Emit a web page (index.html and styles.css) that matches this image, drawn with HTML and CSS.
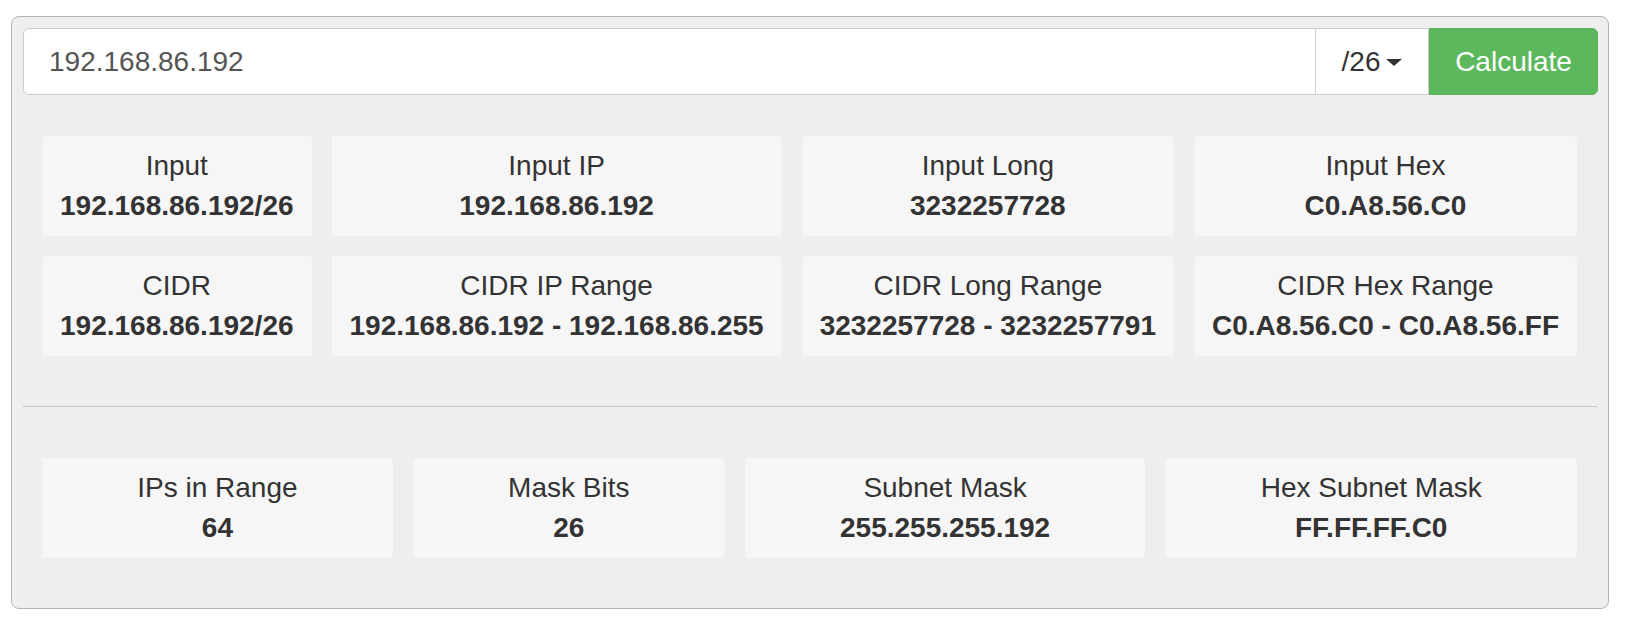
FILE: index.html
```html
<!DOCTYPE html>
<html lang="en">
<head>
<meta charset="utf-8">
<title>IP Subnet Calculator</title>
<link rel="stylesheet" href="styles.css">
</head>
<body>
<div class="panel">
  <form class="input-group">
    <input class="ip-input" type="text" value="192.168.86.192">
    <div class="mask-select">/26 <span class="caret"></span></div>
    <button class="calc-btn" type="button">Calculate</button>
  </form>

  <div class="grid grid-top">
    <div class="card"><div class="label">Input</div><div class="value">192.168.86.192/26</div></div>
    <div class="card"><div class="label">Input IP</div><div class="value">192.168.86.192</div></div>
    <div class="card"><div class="label">Input Long</div><div class="value">3232257728</div></div>
    <div class="card"><div class="label">Input Hex</div><div class="value">C0.A8.56.C0</div></div>
    <div class="card"><div class="label">CIDR</div><div class="value">192.168.86.192/26</div></div>
    <div class="card"><div class="label">CIDR IP Range</div><div class="value">192.168.86.192 - 192.168.86.255</div></div>
    <div class="card"><div class="label">CIDR Long Range</div><div class="value">3232257728 - 3232257791</div></div>
    <div class="card"><div class="label">CIDR Hex Range</div><div class="value">C0.A8.56.C0 - C0.A8.56.FF</div></div>
  </div>

  <hr class="divider">

  <div class="grid grid-bottom">
    <div class="card"><div class="label">IPs in Range</div><div class="value">64</div></div>
    <div class="card"><div class="label">Mask Bits</div><div class="value">26</div></div>
    <div class="card"><div class="label">Subnet Mask</div><div class="value">255.255.255.192</div></div>
    <div class="card"><div class="label">Hex Subnet Mask</div><div class="value">FF.FF.FF.C0</div></div>
  </div>
</div>
</body>
</html>
```

FILE: styles.css
```css
html, body {
  margin: 0;
  padding: 0;
  background: #ffffff;
}

body {
  font-family: "Liberation Sans", Arial, Helvetica, sans-serif;
  color: #333333;
}

.panel {
  box-sizing: border-box;
  width: 1598px;
  height: 593px;
  margin: 16px 0 0 11px;
  padding: 11px;
  background: #eeeeee;
  border: 1px solid #b4b4b4;
  border-radius: 8px;
}

.input-group {
  display: flex;
  height: 67px;
  margin: 0;
}

.ip-input {
  flex: 1 1 auto;
  box-sizing: border-box;
  height: 67px;
  margin: 0;
  padding: 0 25px;
  font-family: "Liberation Sans", Arial, Helvetica, sans-serif;
  font-size: 28px;
  color: #555555;
  background: #ffffff;
  border: 1px solid #cccccc;
  border-radius: 6px 0 0 6px;
  outline: none;
}

.mask-select {
  box-sizing: border-box;
  width: 113px;
  height: 67px;
  display: flex;
  align-items: center;
  justify-content: center;
  gap: 6px;
  font-size: 28px;
  color: #333333;
  background: #ffffff;
  border: 1px solid #cccccc;
  border-left: none;
}

.caret {
  display: inline-block;
  width: 0;
  height: 0;
  margin-top: 2px;
  border-top: 7px solid #333333;
  border-left: 8px solid transparent;
  border-right: 8px solid transparent;
}

.calc-btn {
  box-sizing: border-box;
  width: 169px;
  height: 67px;
  margin: 0 -1px 0 0;
  padding: 0;
  font-family: "Liberation Sans", Arial, Helvetica, sans-serif;
  font-size: 28px;
  color: #ffffff;
  background: #5cb85c;
  border: 1px solid #56b356;
  border-radius: 0 6px 6px 0;
}

.grid {
  display: grid;
  grid-template-columns: repeat(4, auto);
  gap: 20px;
  padding: 0 20px 0 19px;
}

.grid-top {
  margin-top: 41px;
}

.grid-bottom {
  margin-top: 51px;
}

.divider {
  height: 0;
  margin: 50px 0 0 0;
  border: none;
  border-top: 1px solid #c4c4c4;
}

.card {
  box-sizing: border-box;
  height: 100px;
  padding: 10px 0;
  text-align: center;
  font-size: 28px;
  line-height: 40px;
  white-space: nowrap;
  background: #f6f6f6;
  border-radius: 3px;
  box-shadow: 0 0 2px rgba(0, 0, 0, 0.03);
}

.label {
  font-weight: normal;
}

.value {
  font-weight: bold;
}
```
